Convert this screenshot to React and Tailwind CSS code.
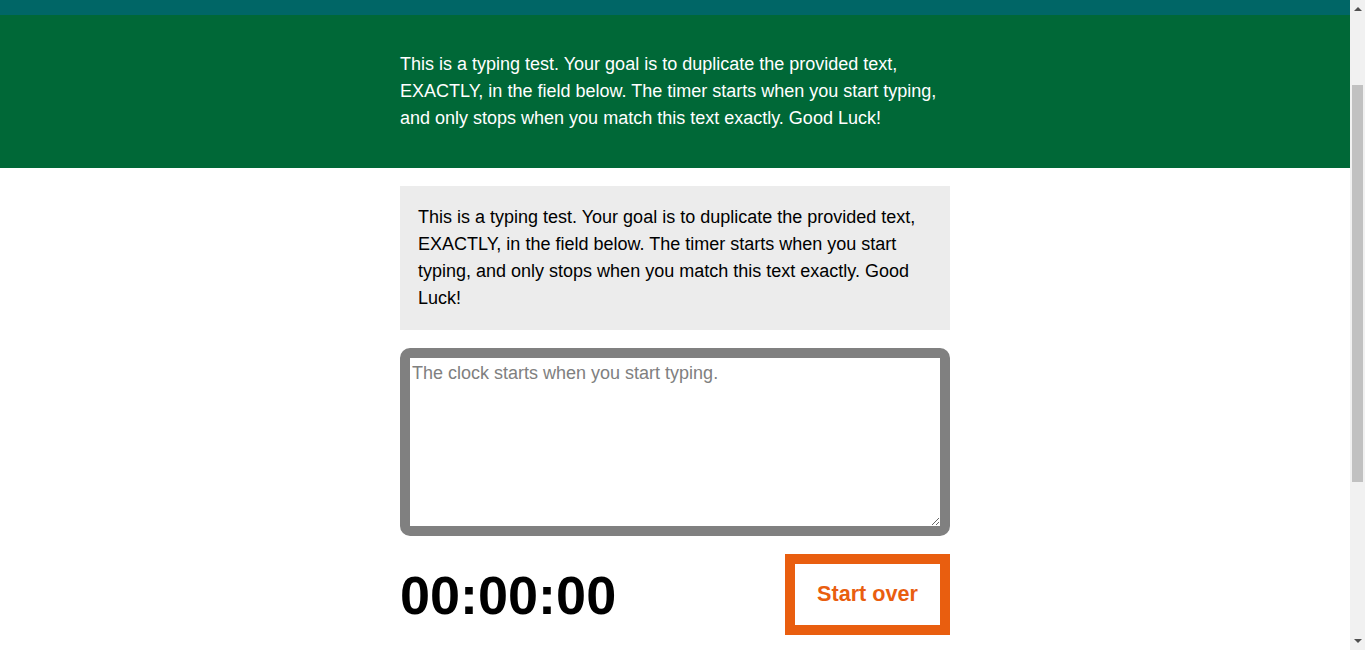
import { useLayoutEffect } from "react";

const intro =
  "This is a typing test. Your goal is to duplicate the provided text, EXACTLY, in the field below. The timer starts when you start typing, and only stops when you match this text exactly. Good Luck!";

function Arrow({ down }) {
  return (
    <div className="flex h-[17px] items-center justify-center">
      <svg width="8" height="5" viewBox="0 0 8 5" className={down ? "rotate-180" : ""}>
        <path d="M0 5 L4 1 L8 5 Z" fill="#505050" />
      </svg>
    </div>
  );
}

// classic scrollbar as seen in the capture
function Scrollbar() {
  return (
    <div className="fixed right-0 top-0 flex h-screen w-[15px] flex-col bg-[#f1f1f1]">
      <Arrow />
      <div className="flex-1 px-[2px]">
        <div className="mt-[68px] h-[397px] bg-[#c1c1c1]" />
      </div>
      <Arrow down />
    </div>
  );
}

export default function App() {
  // the reference was captured a little way down the page
  useLayoutEffect(() => {
    window.scrollTo(0, 112);
  }, []);

  return (
    <div className="min-h-[1011px] bg-white pr-[15px] font-['Liberation_Sans',Arial,sans-serif] text-[18px] leading-[1.5] text-black">
      <header className="h-[127px] bg-[#006666]" />

      <section className="bg-[#006837] py-9">
        <p className="mx-auto w-[550px] text-white">{intro}</p>
      </section>

      <main className="mx-auto w-[550px] pt-[18px]">
        <div className="bg-[#ececec] p-[18px]">
          <p>{intro}</p>
        </div>

        <textarea
          rows={6}
          placeholder="The clock starts when you start typing."
          className="mt-[18px] block h-[188px] w-full rounded-[10px] border-[10px] border-[#808080] bg-white p-[2px] text-[18px] leading-[1.5] placeholder:text-[#808080] focus:outline-none"
        />

        <div className="mt-[18px] flex items-center justify-between">
          <div className="text-[54px] font-bold leading-none">00:00:00</div>
          <button className="h-[81px] w-[165px] border-[10px] border-[#e95e0f] bg-white text-[21.6px] font-bold text-[#e95e0f]">
            Start over
          </button>
        </div>
      </main>

      <Scrollbar />
    </div>
  );
}
